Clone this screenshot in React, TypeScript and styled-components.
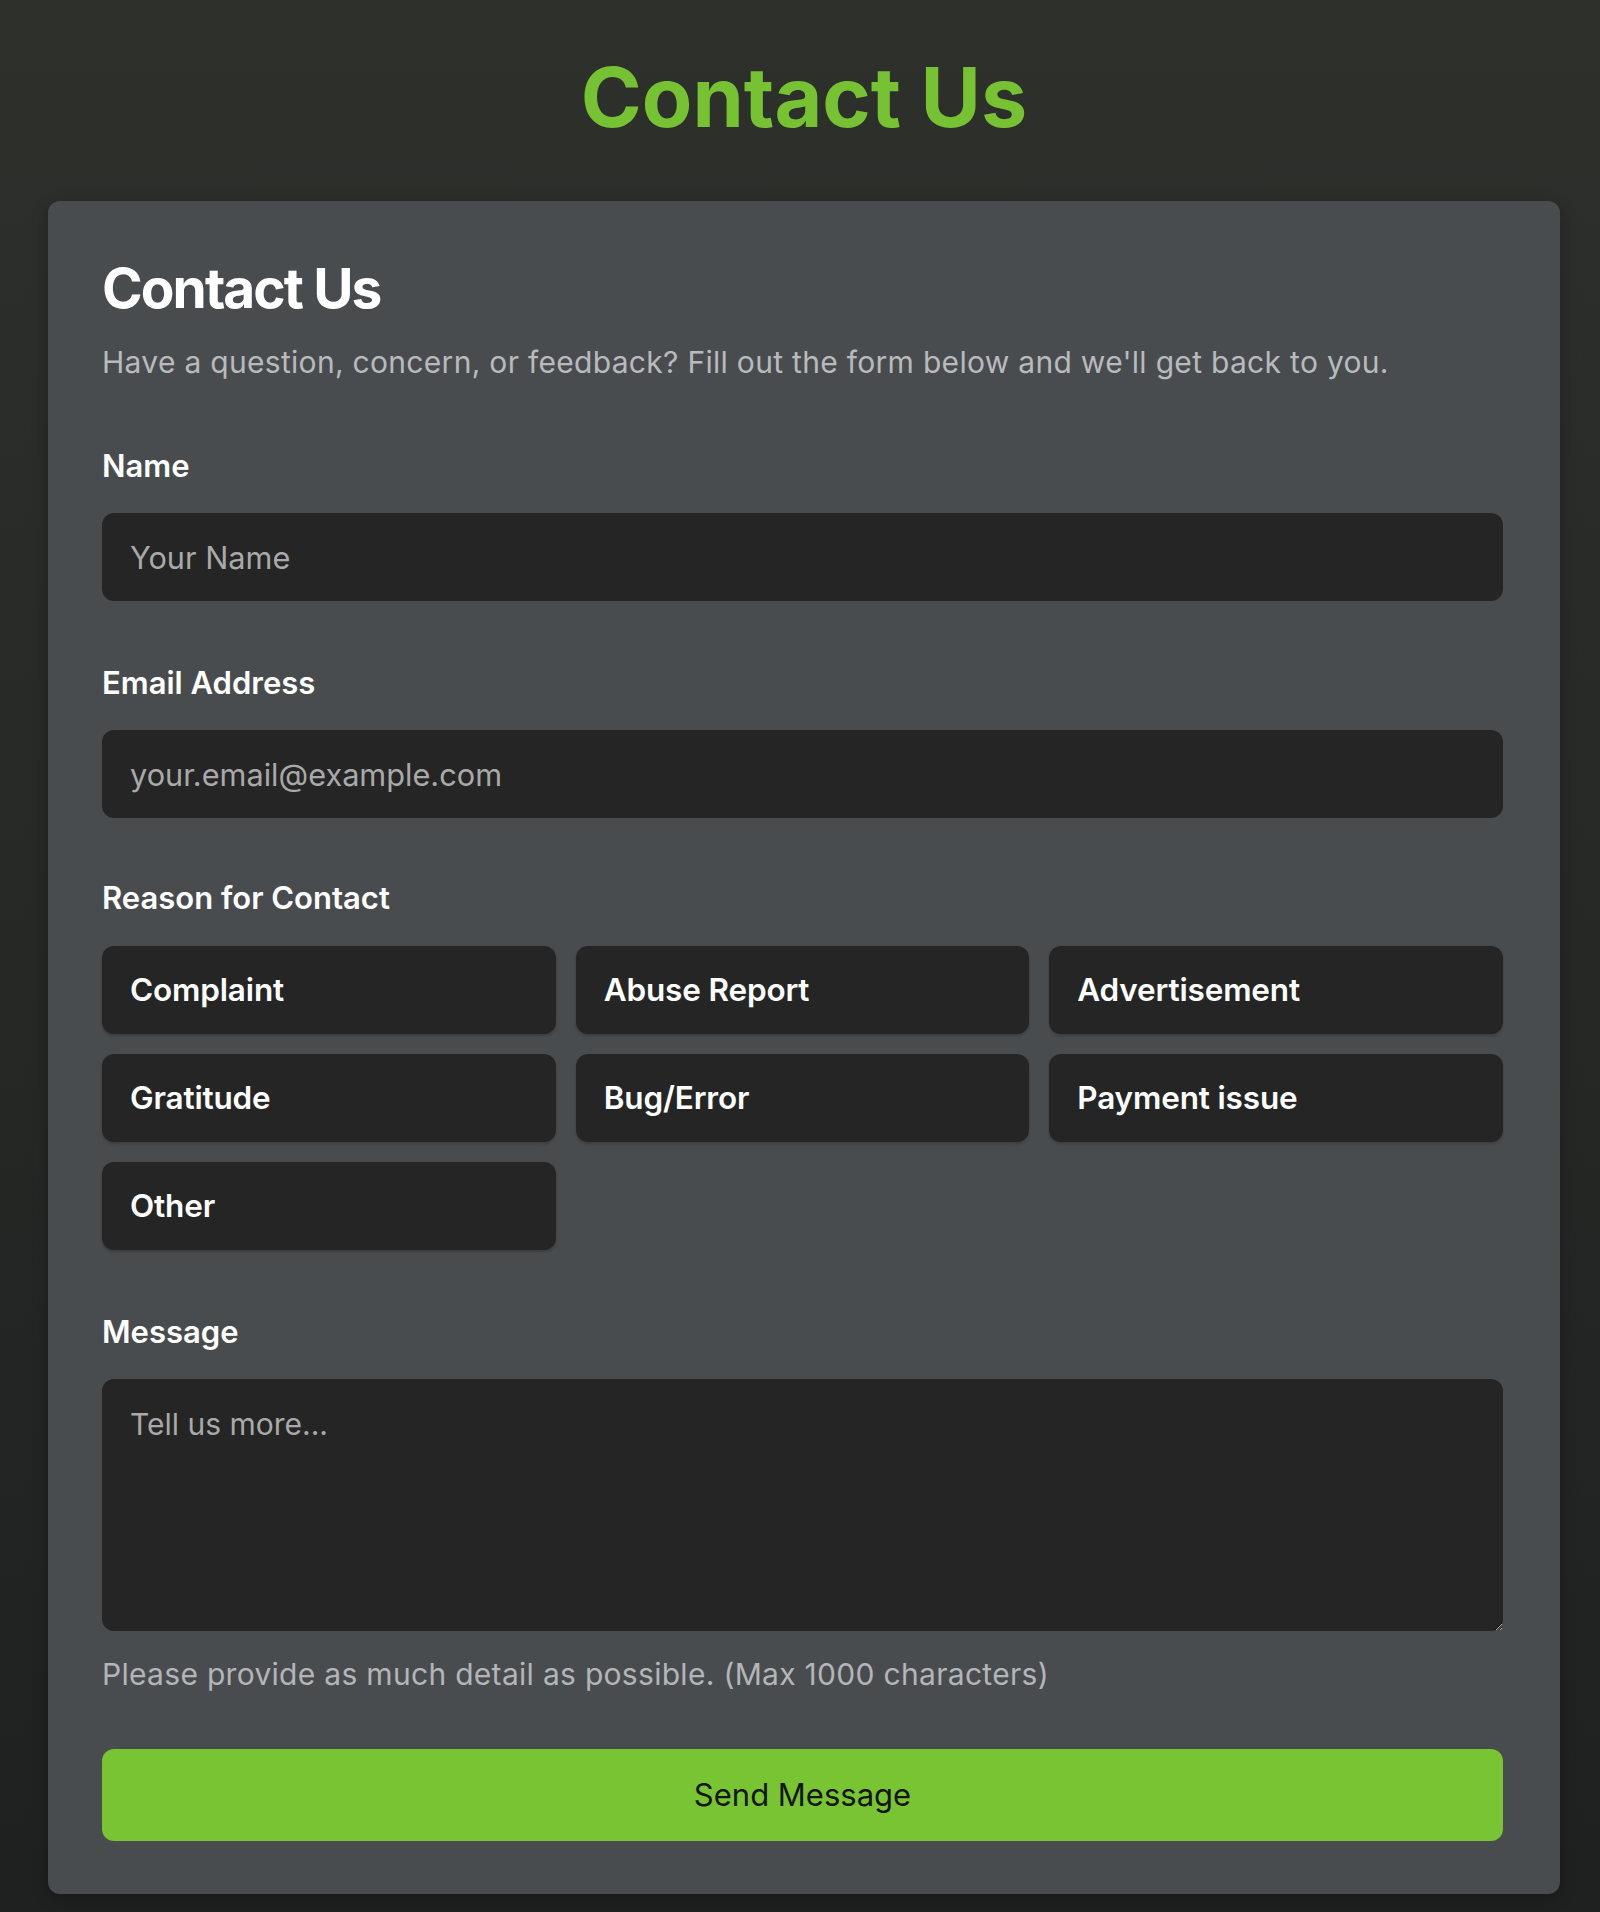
import React from "react";
import styled, { createGlobalStyle } from "styled-components";

const GlobalStyle = createGlobalStyle`
  * { box-sizing: border-box; }
  html, body { margin: 0; padding: 0; }
  body {
    font-family: Inter, "Noto Sans", Arial, sans-serif;
    background: #262826;
  }
`;

const Page = styled.main`
  min-height: 1912px;
  padding: 48px 40px 19px 48px;
  background: linear-gradient(180deg, #2e302c 0%, #272927 45%, #1f2020 100%);
  display: flex;
  flex-direction: column;
`;

const PageTitle = styled.h1`
  margin: 0 0 54px;
  text-align: center;
  font-size: 82.5px;
  line-height: 1.2;
  font-weight: 700;
  letter-spacing: 0;
  color: #76c232;
`;

const Card = styled.section`
  width: 1512px;
  background: #494c4f;
  border-radius: 12px;
  padding: 54px 57px 53px 54px;
  box-shadow: 0 4px 16px rgba(0, 0, 0, 0.25);
  display: flex;
  flex-direction: column;
`;

const CardTitle = styled.h2`
  margin: 0;
  font-size: 55px;
  line-height: 1.2;
  font-weight: 700;
  letter-spacing: -0.035em;
  color: #ffffff;
`;

const Intro = styled.p`
  margin: 23px 0 0;
  font-size: 30px;
  line-height: 1.2;
  letter-spacing: 0.01em;
  color: #b8babc;
`;

const Field = styled.div<{ $gap: number }>`
  margin-top: ${(p) => p.$gap}px;
  display: flex;
  flex-direction: column;
`;

const Label = styled.label`
  font-size: 31px;
  line-height: 1.2;
  font-weight: 600;
  color: #ffffff;
  margin-bottom: 29px;
`;

const TextInput = styled.input`
  height: 88px;
  width: 100%;
  border: none;
  outline: none;
  border-radius: 12px;
  background: #252525;
  color: #e6e6e6;
  padding: 0 28px;
  font-family: inherit;
  font-size: 30.7px;
  &::placeholder {
    color: #a9a9a9;
  }
`;

const ReasonGrid = styled.div`
  display: grid;
  grid-template-columns: repeat(3, 1fr);
  gap: 20px;
`;

const ReasonButton = styled.button`
  height: 88px;
  border: none;
  border-radius: 12px;
  background: #252525;
  color: #ffffff;
  text-align: left;
  padding: 0 28px;
  font-family: inherit;
  font-size: 31.5px;
  font-weight: 600;
  letter-spacing: -0.005em;
  cursor: pointer;
  box-shadow: 0 2px 3px rgba(0, 0, 0, 0.2);
`;

const MessageArea = styled.textarea`
  height: 252px;
  width: 100%;
  border: none;
  outline: none;
  border-radius: 12px;
  background: #252525;
  color: #e6e6e6;
  padding: 27px 28px;
  font-family: inherit;
  font-size: 30px;
  line-height: 1.2;
  resize: vertical;
  &::placeholder {
    color: #a9a9a9;
  }
`;

const Hint = styled.p`
  margin: 25px 0 0;
  font-size: 30px;
  line-height: 1.2;
  letter-spacing: 0.01em;
  color: #b3b5b7;
`;

const SubmitButton = styled.button`
  margin-top: 57px;
  height: 92px;
  width: 100%;
  border: none;
  border-radius: 12px;
  background: #78c433;
  color: #151515;
  font-family: inherit;
  font-size: 31px;
  font-weight: 400;
  cursor: pointer;
`;

const reasons = [
  "Complaint",
  "Abuse Report",
  "Advertisement",
  "Gratitude",
  "Bug/Error",
  "Payment issue",
  "Other",
];

export default function App() {
  return (
    <>
      <GlobalStyle />
      <Page>
        <PageTitle>Contact Us</PageTitle>
        <Card>
          <CardTitle>Contact Us</CardTitle>
          <Intro>
            Have a question, concern, or feedback? Fill out the form below and
            we'll get back to you.
          </Intro>

          <Field $gap={67}>
            <Label htmlFor="name">Name</Label>
            <TextInput id="name" type="text" placeholder="Your Name" />
          </Field>

          <Field $gap={63}>
            <Label htmlFor="email">Email Address</Label>
            <TextInput
              id="email"
              type="email"
              placeholder="your.email@example.com"
            />
          </Field>

          <Field $gap={61}>
            <Label>Reason for Contact</Label>
            <ReasonGrid>
              {reasons.map((r) => (
                <ReasonButton key={r} type="button">
                  {r}
                </ReasonButton>
              ))}
            </ReasonGrid>
          </Field>

          <Field $gap={63}>
            <Label htmlFor="message">Message</Label>
            <MessageArea id="message" placeholder="Tell us more..." />
          </Field>

          <Hint>Please provide as much detail as possible. (Max 1000 characters)</Hint>

          <SubmitButton type="button">Send Message</SubmitButton>
        </Card>
      </Page>
    </>
  );
}
